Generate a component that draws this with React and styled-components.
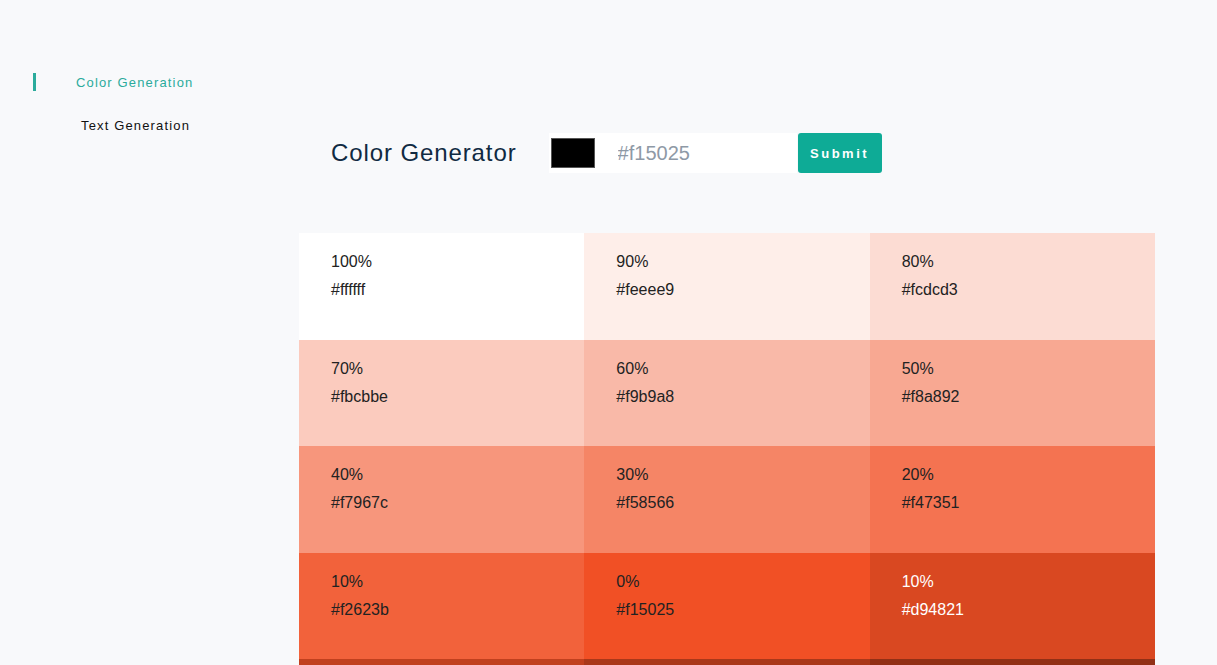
import styled, { createGlobalStyle } from 'styled-components';

const GlobalStyle = createGlobalStyle`
  body {
    margin: 0;
    background: #f8f9fb;
    font-family: "Liberation Sans", Arial, sans-serif;
    color: #102a42;
  }
`

const Page = styled.div`
  display: flex;
  align-items: flex-start;
`

const Sidebar = styled.nav`
  width: 299px;
  flex-shrink: 0;
  padding-top: 73px;
  box-sizing: border-box;
  display: flex;
  flex-direction: column;
  gap: 25px;
`

const NavItem = styled.a`
  display: block;
  margin-left: 33px;
  height: 18px;
  line-height: 20px;
  padding-left: ${p => (p.active ? '40px' : '45px')};
  border-left: 3px solid ${p => (p.active ? '#2bab9c' : 'transparent')};
  font-size: 13px;
  letter-spacing: 1.15px;
  color: ${p => (p.active ? '#2bab9c' : '#111')};
  cursor: pointer;
`

const Main = styled.main`
  width: 856px;
  padding-top: 133px;
`

const Header = styled.div`
  display: flex;
  align-items: center;
  margin-left: 32px;
  margin-bottom: 60px;
`

const Title = styled.h3`
  margin: 0 32px 0 0;
  font-size: 24px;
  font-weight: 400;
  letter-spacing: 0.9px;
  color: #102a42;
`

const Form = styled.form`
  display: flex;
  align-items: center;
`

const InputBox = styled.div`
  display: flex;
  align-items: center;
  width: 248px;
  height: 40px;
  background: #fff;
  box-sizing: border-box;
  padding-left: 2px;
`

const Swatch = styled.div`
  width: 44px;
  height: 30px;
  background: #000;
  border: 1px solid #555;
  box-sizing: border-box;
`

const HexInput = styled.input`
  border: none;
  outline: none;
  background: transparent;
  margin-left: 21px;
  width: 170px;
  font-family: inherit;
  font-size: 20px;
  color: #222;
  &::placeholder {
    color: #8e99a6;
  }
`

const SubmitButton = styled.button`
  width: 84px;
  height: 40px;
  margin-left: 1px;
  border: none;
  border-radius: 3px;
  background: #0eab96;
  color: #fff;
  font-family: inherit;
  font-size: 13px;
  font-weight: 700;
  letter-spacing: 2.5px;
  cursor: pointer;
`

const Grid = styled.section`
  display: grid;
  grid-template-columns: repeat(3, 1fr);
  grid-auto-rows: 106.5px;
`

const Cell = styled.article`
  background: ${p => p.bg};
  color: ${p => (p.dark ? '#fff' : '#222')};
  padding: 19px 32px;
  box-sizing: border-box;
  font-size: 16px;
`

const Percent = styled.p`
  margin: 0;
  line-height: 20px;
`

const Hex = styled.p`
  margin: 8px 0 0;
  line-height: 20px;
`

const colors = [
  ['100%', 'ffffff'], ['90%', 'feeee9'], ['80%', 'fcdcd3'],
  ['70%', 'fbcbbe'], ['60%', 'f9b9a8'], ['50%', 'f8a892'],
  ['40%', 'f7967c'], ['30%', 'f58566'], ['20%', 'f47351'],
  ['10%', 'f2623b'], ['0%', 'f15025'], ['10%', 'd94821', true],
  ['20%', 'c1401e', true], ['30%', 'a9381a', true], ['40%', '913016', true],
  ['50%', '792813', true], ['60%', '60200f', true], ['70%', '48180b', true],
]

const App = () => {
  return (
    <Page>
      <GlobalStyle />
      <Sidebar>
        <NavItem active>Color Generation</NavItem>
        <NavItem>Text Generation</NavItem>
      </Sidebar>
      <Main>
        <Header>
          <Title>Color Generator</Title>
          <Form onSubmit={e => e.preventDefault()}>
            <InputBox>
              <Swatch />
              <HexInput placeholder="#f15025" />
            </InputBox>
            <SubmitButton type="submit">Submit</SubmitButton>
          </Form>
        </Header>
        <Grid>
          {colors.map(([pct, hex, dark], i) => (
            <Cell key={i} bg={'#' + hex} dark={dark}>
              <Percent>{pct}</Percent>
              <Hex>#{hex}</Hex>
            </Cell>
          ))}
        </Grid>
      </Main>
    </Page>
  )
}

export default App
